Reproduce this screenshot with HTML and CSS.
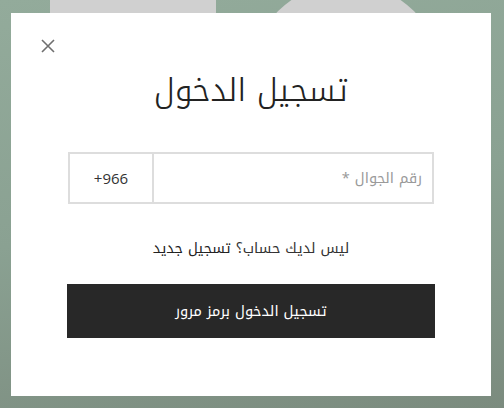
FILE: index.html
```html
<!DOCTYPE html>
<html lang="ar" dir="rtl">
<head>
<meta charset="utf-8">
<link rel="stylesheet" href="styles.css">
</head>
<body>
<div class="page">
  <div class="deco-rect"></div>
  <div class="deco-circle"></div>
  <div class="modal">
    <button class="close" aria-label="close">
      <svg width="14" height="14" viewBox="0 0 14 14"><path d="M1 1L13 13M13 1L1 13" stroke="#6f6f6f" stroke-width="1.6" fill="none"/></svg>
    </button>
    <h1 class="title">تسجيل الدخول</h1>
    <div class="field">
      <div class="phone">رقم الجوال *</div>
      <div class="prefix" dir="ltr">+966</div>
    </div>
    <p class="signup">ليس لديك حساب؟ <a href="#">تسجيل جديد</a></p>
    <button class="submit">تسجيل الدخول برمز مرور</button>
  </div>
</div>
</body>
</html>
```
FILE: styles.css
```css
html, body {
  margin: 0;
  padding: 0;
}
body {
  width: 504px;
  height: 408px;
  overflow: hidden;
  font-family: "Noto Kufi Arabic", "Noto Sans Arabic", "DejaVu Sans", sans-serif;
}
.page {
  position: relative;
  width: 504px;
  height: 408px;
  background: linear-gradient(170deg, #93ab9b 0%, #8aa192 50%, #7b8b7e 100%);
}
.deco-rect {
  position: absolute;
  left: 50px;
  top: 0;
  width: 166px;
  height: 60px;
  background: #d0d0d0;
}
.deco-circle {
  position: absolute;
  left: 250px;
  top: -17px;
  width: 192px;
  height: 192px;
  border-radius: 50%;
  background: #d0d0d0;
}
.modal {
  position: absolute;
  left: 11px;
  top: 13px;
  width: 480px;
  height: 383px;
  background: #fff;
  display: flex;
  flex-direction: column;
  align-items: center;
  box-sizing: border-box;
  padding: 0 56px 0 56px;
}
.close {
  position: absolute;
  left: 30px;
  top: 26px;
  border: 0;
  background: none;
  padding: 0;
  width: 14px;
  height: 14px;
  cursor: pointer;
}
.close svg { display: block; }
.title {
  margin: 58px 0 0;
  font-size: 32px;
  font-weight: 300;
  color: #222;
  line-height: 40px;
  height: 40px;
}
.field {
  margin-top: 41px;
  width: 366px;
  height: 52px;
  box-sizing: border-box;
  border: 2px solid #dddddd;
  display: flex;
  flex-direction: row;
}
.phone {
  flex: 1;
  display: flex;
  align-items: center;
  padding-right: 10px;
  font-size: 14.5px;
  color: #9a9a9a;
}
.prefix {
  width: 82px;
  border-right: 2px solid #dddddd;
  display: flex;
  align-items: center;
  justify-content: center;
  font-size: 15px;
  color: #333;
  font-family: "Open Sans", "DejaVu Sans", sans-serif;
}
.signup {
  margin: 34px 0 0;
  font-size: 14.5px;
  color: #333;
  line-height: 20px;
}
.signup a {
  color: #222;
  text-decoration: none;
}
.submit {
  margin-top: 26px;
  width: 368px;
  height: 54px;
  border: 0;
  background: #282828;
  color: #fff;
  font-family: inherit;
  font-size: 14.6px;
  cursor: pointer;
}
```
